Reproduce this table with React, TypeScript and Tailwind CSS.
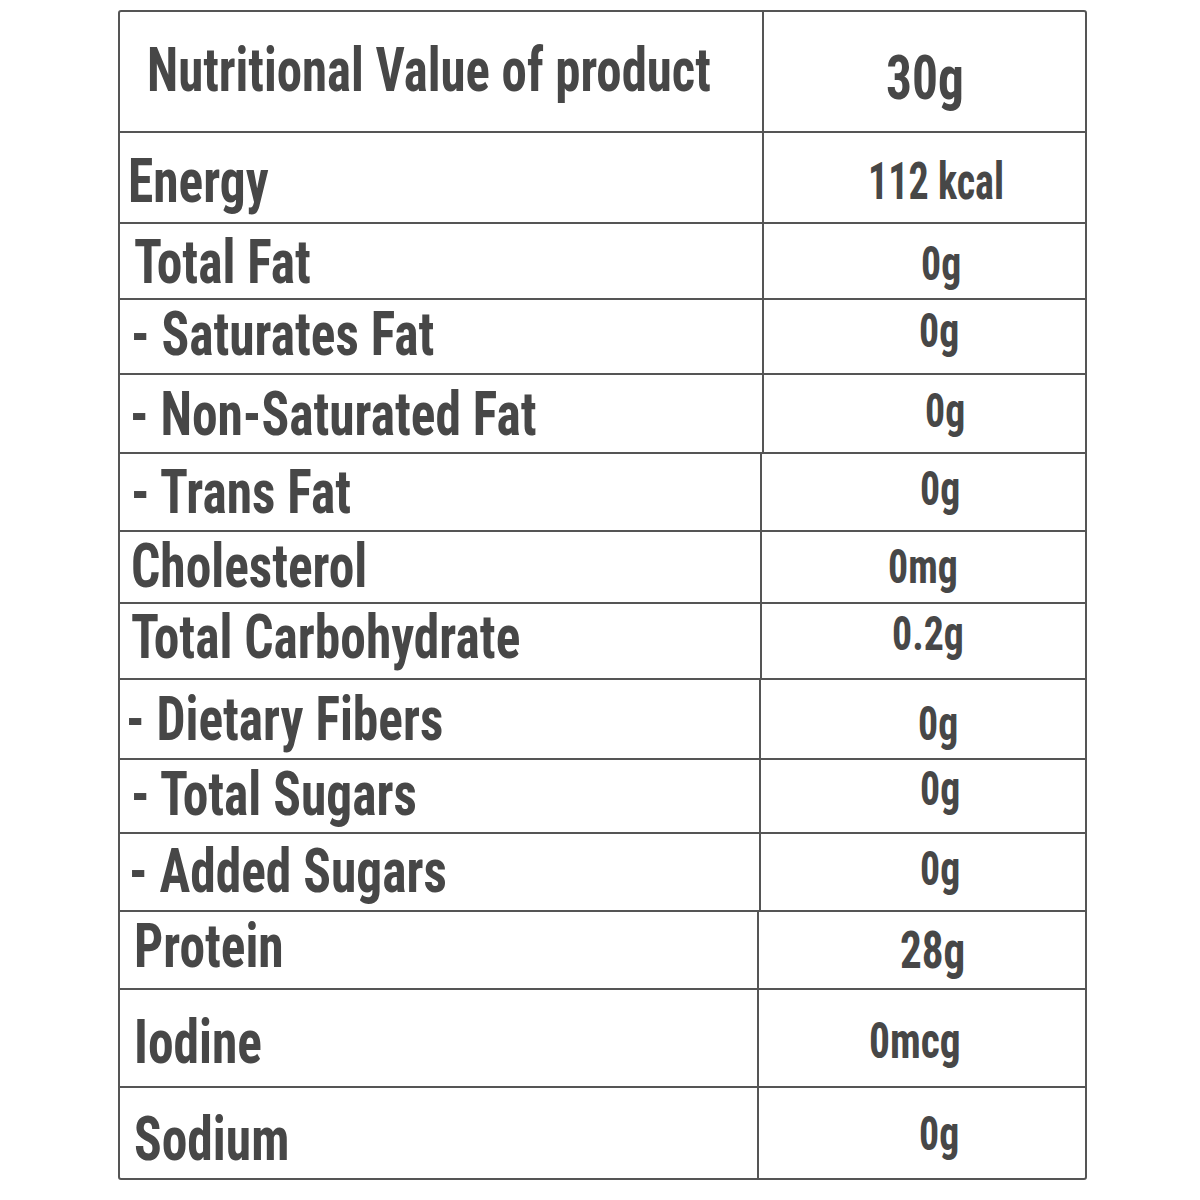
type Row = {
  label: string;
  value: string;
  row: string;
  cell: string;
  labelPad: string;
  valuePad: string;
  valueSize: string;
  valueScale?: string;
};

// rows follow the photo: the divider drifts a couple of px to the left lower down
const rows: Row[] = [
  { label: 'Energy', value: '112 kcal', row: 'h-[91px] border-b-2', cell: 'w-[644px]', labelPad: 'pl-[8px] pt-[17px]', valuePad: 'pl-[104px] pt-[23px]', valueSize: 'text-[52px]', valueScale: 'scale-x-[0.77]' },
  { label: 'Total Fat', value: '0g', row: 'h-[76px] border-b-2', cell: 'w-[644px]', labelPad: 'pl-[14px] pt-[7px]', valuePad: 'pl-[157px] pt-[16px]', valueSize: 'text-[48px]' },
  { label: '- Saturates Fat', value: '0g', row: 'h-[75px] border-b-2', cell: 'w-[644px]', labelPad: 'pl-[11px] pt-[3px]', valuePad: 'pl-[155px] pt-[7px]', valueSize: 'text-[48px]' },
  { label: '- Non-Saturated Fat', value: '0g', row: 'h-[79px] border-b-2', cell: 'w-[644px]', labelPad: 'pl-[10px] pt-[8px]', valuePad: 'pl-[161px] pt-[12px]', valueSize: 'text-[48px]' },
  { label: '- Trans Fat', value: '0g', row: 'h-[78px] border-b-2', cell: 'w-[642px]', labelPad: 'pl-[11px] pt-[7px]', valuePad: 'pl-[158px] pt-[11px]', valueSize: 'text-[48px]' },
  { label: 'Cholesterol', value: '0mg', row: 'h-[72px] border-b-2', cell: 'w-[642px]', labelPad: 'pl-[11px] pt-[3px]', valuePad: 'pl-[126px] pt-[11px]', valueSize: 'text-[48px]' },
  { label: 'Total Carbohydrate', value: '0.2g', row: 'h-[76px] border-b-2', cell: 'w-[642px]', labelPad: 'pl-[11px] pt-[2px]', valuePad: 'pl-[130px] pt-[6px]', valueSize: 'text-[48px]' },
  { label: '- Dietary Fibers', value: '0g', row: 'h-[80px] border-b-2', cell: 'w-[641px]', labelPad: 'pl-[6px] pt-[8px]', valuePad: 'pl-[157px] pt-[20px]', valueSize: 'text-[48px]' },
  { label: '- Total Sugars', value: '0g', row: 'h-[74px] border-b-2', cell: 'w-[641px]', labelPad: 'pl-[11px] pt-[3px]', valuePad: 'pl-[159px] pt-[5px]', valueSize: 'text-[48px]' },
  { label: '- Added Sugars', value: '0g', row: 'h-[78px] border-b-2', cell: 'w-[641px]', labelPad: 'pl-[9px] pt-[6px]', valuePad: 'pl-[159px] pt-[11px]', valueSize: 'text-[48px]' },
  { label: 'Protein', value: '28g', row: 'h-[78px] border-b-2', cell: 'w-[639px]', labelPad: 'pl-[14px] pt-[3px]', valuePad: 'pl-[141px] pt-[13px]', valueSize: 'text-[52px]' },
  { label: 'Iodine', value: '0mcg', row: 'h-[98px] border-b-2', cell: 'w-[639px]', labelPad: 'pl-[14px] pt-[21px]', valuePad: 'pl-[110px] pt-[26px]', valueSize: 'text-[50px]' },
  { label: 'Sodium', value: '0g', row: 'h-[90px]', cell: 'w-[639px]', labelPad: 'pl-[14px] pt-[20px]', valuePad: 'pl-[160px] pt-[22px]', valueSize: 'text-[48px]' },
];

const Text = ({ children, size, scale = 'scale-x-[0.83]' }: { children: string; size: string; scale?: string }) => (
  <span className={`inline-block origin-left whitespace-nowrap font-bold leading-none ${scale} ${size}`}>
    {children}
  </span>
);

export default function App() {
  return (
    <div className="w-[1200px] h-[1200px] bg-white pt-[10px] pl-[118px] font-['Roboto_Condensed',sans-serif] text-[#474747]">
      <div className="w-[969px] h-[1170px] border-2 border-[#555555] rounded-[3px] flex flex-col">
        <div className="h-[121px] border-b-2 border-[#555555] flex">
          <div className="w-[644px] border-r-2 border-[#555555] pl-[27px] pt-[27px]">
            <Text size="text-[62px]" scale="scale-x-[0.82]">Nutritional Value of product</Text>
          </div>
          <div className="flex-1 pl-[122px] pt-[35px]">
            <Text size="text-[62px]">30g</Text>
          </div>
        </div>
        {rows.map((r) => (
          <div key={r.label} className={`flex border-[#555555] ${r.row}`}>
            <div className={`border-r-2 border-[#555555] ${r.cell} ${r.labelPad}`}>
              <Text size="text-[62px]">{r.label}</Text>
            </div>
            <div className={`flex-1 ${r.valuePad}`}>
              <Text size={r.valueSize} scale={r.valueScale}>{r.value}</Text>
            </div>
          </div>
        ))}
      </div>
    </div>
  );
}
